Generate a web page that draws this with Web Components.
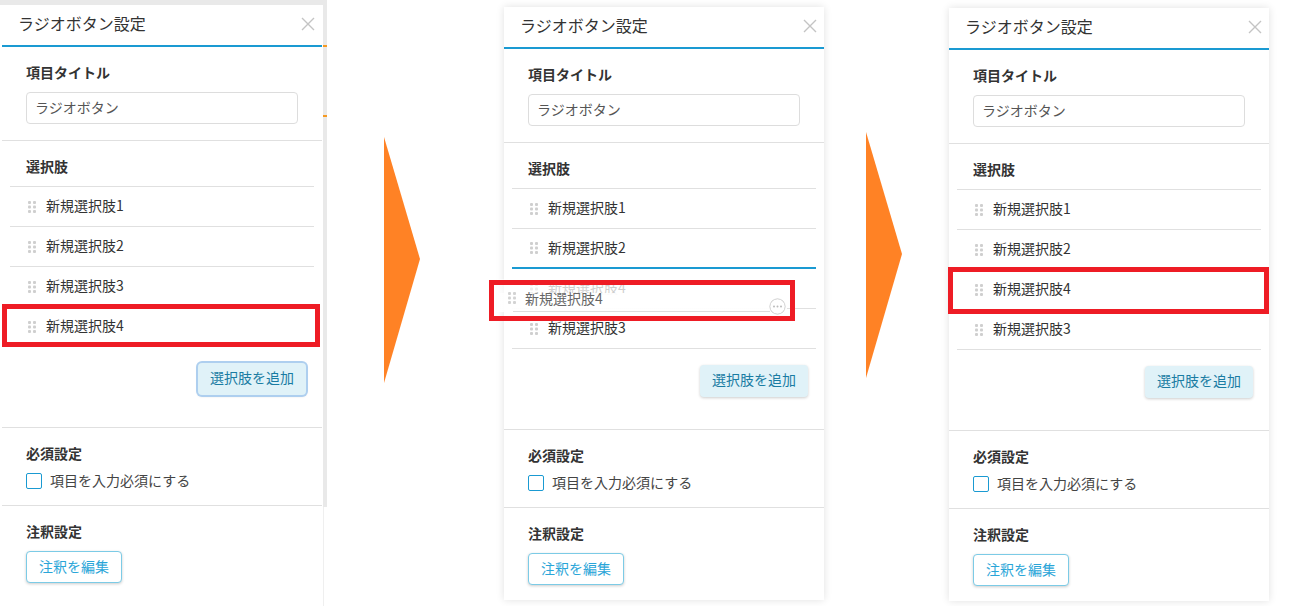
<!DOCTYPE html>
<html lang="ja">
<head>
<meta charset="utf-8">
<title>ラジオボタン設定</title>
<style>
html, body { margin: 0; height: 606px; overflow: hidden; background: #fff; }
body { position: relative; width: 1290px; font-family: "Noto Sans CJK JP", "Liberation Sans", sans-serif; color: #333; }
settings-panel, flow-arrow, red-frame, drag-ghost, backdrop-strip { position: absolute; }
</style>
</head>
<body>

<backdrop-strip style="left:0;top:0;width:327px;height:5px"></backdrop-strip>
<backdrop-strip style="left:323px;top:0;width:4px;height:507px"></backdrop-strip>
<backdrop-strip tone="line" style="left:323px;top:507px;width:1px;height:99px"></backdrop-strip>
<backdrop-strip tone="tick" style="left:323px;top:45px;width:4px;height:2px"></backdrop-strip>
<backdrop-strip tone="tick" style="left:323px;top:115px;width:4px;height:2px"></backdrop-strip>

<settings-panel flat style="left:2px;top:5px;height:601px">
  <choice-row>新規選択肢1</choice-row>
  <choice-row>新規選択肢2</choice-row>
  <choice-row>新規選択肢3</choice-row>
  <choice-row>新規選択肢4</choice-row>
  <action-button slot="add" focused>選択肢を追加</action-button>
</settings-panel>

<settings-panel style="left:504px;top:7px;height:593px">
  <choice-row>新規選択肢1</choice-row>
  <choice-row drop>新規選択肢2</choice-row>
  <choice-row faint>新規選択肢4</choice-row>
  <choice-row>新規選択肢3</choice-row>
  <action-button slot="add">選択肢を追加</action-button>
</settings-panel>

<settings-panel style="left:949px;top:8px;height:593px">
  <choice-row>新規選択肢1</choice-row>
  <choice-row>新規選択肢2</choice-row>
  <choice-row>新規選択肢4</choice-row>
  <choice-row>新規選択肢3</choice-row>
  <action-button slot="add">選択肢を追加</action-button>
</settings-panel>

<flow-arrow style="left:384px;top:137px"></flow-arrow>
<flow-arrow style="left:866px;top:132px"></flow-arrow>

<drag-ghost style="left:497px;top:279px">新規選択肢4</drag-ghost>

<red-frame style="left:2px;top:304px;width:318px;height:43px"></red-frame>
<red-frame style="left:489px;top:280px;width:306px;height:41px"></red-frame>
<red-frame style="left:948px;top:267px;width:321px;height:47px"></red-frame>

<script>
var gripIcon = `<svg width="8" height="12" viewBox="0 0 8 12" fill="#cfcfcf">
  <rect x="0" y="0" width="3" height="3" rx="1"/><rect x="5" y="0" width="3" height="3" rx="1"/>
  <rect x="0" y="4.5" width="3" height="3" rx="1"/><rect x="5" y="4.5" width="3" height="3" rx="1"/>
  <rect x="0" y="9" width="3" height="3" rx="1"/><rect x="5" y="9" width="3" height="3" rx="1"/>
</svg>`;

class BackdropStrip extends HTMLElement {
  constructor() {
    super();
    this.attachShadow({mode: 'open'}).innerHTML = `<style>
      :host { display: block; background: #e9e9e9; }
      :host([tone="line"]) { background: #efefef; }
      :host([tone="tick"]) { background: #f59a23; }
    </style>`;
  }
}

class ActionButton extends HTMLElement {
  constructor() {
    super();
    this.attachShadow({mode: 'open'}).innerHTML = `<style>
      :host {
        display: inline-flex; align-items: center; justify-content: center;
        box-sizing: border-box; height: 32px; width: 108px; padding-bottom: 4px; border-radius: 4px;
        background: #e0f2f8; color: #1a7ca3; font-size: 14px;
        box-shadow: 0 1px 3px rgba(0,0,0,.2);
      }
      :host([focused]) { box-shadow: 0 0 0 2px #aecfef, 0 1px 3px rgba(0,0,0,.2); }
      :host([outline]) {
        width: 96px; padding-bottom: 2px; background: #fff; color: #2aa5d8;
        border: 1px solid #7ccbe6;
      }
    </style><slot></slot>`;
  }
}

class ChoiceRow extends HTMLElement {
  constructor() {
    super();
    this.attachShadow({mode: 'open'}).innerHTML = `<style>
      :host {
        display: flex; align-items: center; box-sizing: border-box;
        height: 40px; padding-left: 18px; border-bottom: 1px solid #e0e0e0;
        font-size: 14px; color: #333;
      }
      :host([drop]) { border-bottom: 2px solid #1a9ad2; }
      :host([faint]) { color: #888; }
      .grip { display: flex; width: 18px; flex: none; }
      .label { margin-top: -3px; }
      svg { display: block; }
    </style><span class="grip">${gripIcon}</span><span class="label"><slot></slot></span>`;
  }
}

class SettingsPanel extends HTMLElement {
  constructor() {
    super();
    this.attachShadow({mode: 'open'}).innerHTML = `<style>
      :host {
        display: flex; flex-direction: column; width: 320px; background: #fff;
        box-shadow: 0 0 8px rgba(0,0,0,.12); font-size: 14px; color: #333;
      }
      :host([flat]) { box-shadow: none; }
      header {
        display: flex; flex: none; align-items: center; justify-content: space-between;
        box-sizing: border-box; height: 42px; padding: 0 7px 4px 16px;
        border-bottom: 2px solid #1a9ad2; font-size: 16px;
      }
      header svg { display: block; margin-top: 2px; }
      section { flex: none; padding: 16px 24px; border-bottom: 1px solid #e0e0e0; }
      section:last-child { padding-bottom: 15px; border-bottom: 0; }
      h3 { margin: 0 0 9px; padding-bottom: 2px; font-size: 14px; line-height: 18px; font-weight: 700; color: #333; }
      .field {
        display: flex; align-items: center; box-sizing: border-box; height: 32px;
        padding: 0 8px 2px; border: 1px solid #ddd; border-radius: 4px; color: #555;
      }
      .choices { padding: 16px 8px 32px; }
      .choices h3 { margin-left: 16px; }
      .list { border-top: 1px solid #e0e0e0; }
      .add { display: flex; justify-content: flex-end; padding: 16px 8px 0 0; }
      .check { display: flex; align-items: center; gap: 8px; height: 16px; color: #444; }
      .check span:last-child { margin-top: -2px; }
      .box { box-sizing: border-box; width: 16px; height: 16px; border: 1px solid #1a9ad2; border-radius: 2px; }
    </style>
    <header>
      <span>ラジオボタン設定</span>
      <svg width="14" height="14" viewBox="0 0 14 14" stroke="#c4c4c4" stroke-width="1.4" fill="none">
        <path d="M1 1 13 13M13 1 1 13"/>
      </svg>
    </header>
    <section>
      <h3>項目タイトル</h3>
      <div class="field">ラジオボタン</div>
    </section>
    <section class="choices">
      <h3>選択肢</h3>
      <div class="list"><slot></slot></div>
      <div class="add"><slot name="add"></slot></div>
    </section>
    <section>
      <h3>必須設定</h3>
      <div class="check"><span class="box"></span><span>項目を入力必須にする</span></div>
    </section>
    <section>
      <h3>注釈設定</h3>
      <action-button outline>注釈を編集</action-button>
    </section>`;
  }
}

class FlowArrow extends HTMLElement {
  constructor() {
    super();
    this.attachShadow({mode: 'open'}).innerHTML = `<style>
      :host { display: block; width: 36px; height: 246px; }
      svg { display: block; }
    </style><svg width="36" height="246" viewBox="0 0 36 246"><path d="M0 0 36 122 0 246Z" fill="#ff8225"/></svg>`;
  }
}

class RedFrame extends HTMLElement {
  constructor() {
    super();
    this.attachShadow({mode: 'open'}).innerHTML = `<style>
      :host { display: block; box-sizing: border-box; border: 5px solid #ee1c25; }
    </style>`;
  }
}

class DragGhost extends HTMLElement {
  constructor() {
    super();
    this.attachShadow({mode: 'open'}).innerHTML = `<style>
      :host {
        display: flex; box-sizing: border-box; width: 290px; height: 33px;
        padding: 9px 0 0 11px; background: linear-gradient(rgba(255,255,255,.6) 0 14px, rgba(255,255,255,.96) 14px);
        font-size: 14px; line-height: 20px; color: #666;
      }
      .grip { display: flex; align-items: center; width: 17px; height: 20px; flex: none; opacity: .9; }
      .line { position: absolute; left: 16px; right: 17px; bottom: 0; height: 1px; background: #ddd; }
      .more {
        position: absolute; left: 272px; top: 19px; box-sizing: border-box;
        width: 17px; height: 17px; background: #fff; border-radius: 50%;
      }
      svg { display: block; }
    </style><span class="grip">${gripIcon}</span><slot></slot><span class="line"></span>
    <svg class="more" viewBox="0 0 17 17" fill="none">
      <circle cx="8.5" cy="8.5" r="7.7" stroke="#ccc"/>
      <g fill="#bbb"><circle cx="5" cy="8.5" r="1"/><circle cx="8.5" cy="8.5" r="1"/><circle cx="12" cy="8.5" r="1"/></g>
    </svg>`;
  }
}

customElements.define('backdrop-strip', BackdropStrip);
customElements.define('action-button', ActionButton);
customElements.define('choice-row', ChoiceRow);
customElements.define('settings-panel', SettingsPanel);
customElements.define('flow-arrow', FlowArrow);
customElements.define('red-frame', RedFrame);
customElements.define('drag-ghost', DragGhost);
</script>
</body>
</html>
